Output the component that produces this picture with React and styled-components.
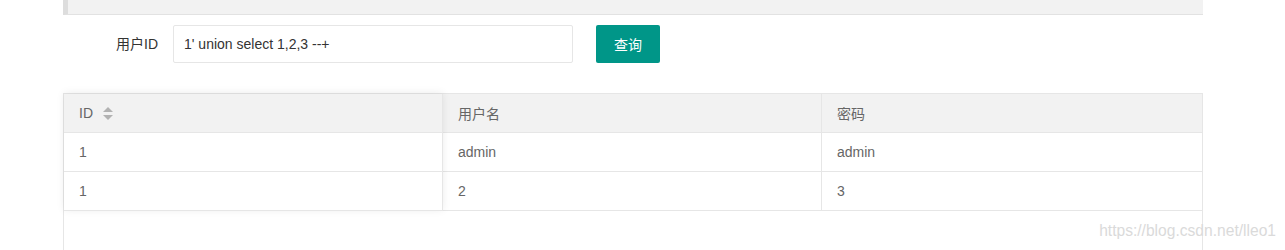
import styled, { createGlobalStyle } from "styled-components";

const GlobalStyle = createGlobalStyle`
  html, body {
    margin: 0;
    padding: 0;
    background: #fff;
    overflow: hidden;
  }
  body {
    font-family: "Liberation Sans", "Noto Sans CJK SC", sans-serif;
    font-size: 14px;
    color: #333;
  }
`;

const columns = [
  { key: "id", title: "ID", width: 379 },
  { key: "username", title: "用户名", width: 379 },
  { key: "password", title: "密码" },
];

const rows = [
  { id: "1", username: "admin", password: "admin" },
  { id: "1", username: "2", password: "3" },
];

export default function App() {
  const [fixed, ...rest] = columns;

  return (
    <Page>
      <GlobalStyle />
      <Quote />

      <FormRow>
        <Label>用户ID</Label>
        <Input type="text" defaultValue="1' union select 1,2,3 --+" />
        <Button>查询</Button>
      </FormRow>

      <TableBox>
        <FixedCol $width={fixed.width}>
          <HeadCell $border>
            {fixed.title}
            <SortIcon />
          </HeadCell>
          {rows.map((r, i) => (
            <Cell key={i} $border>
              {r[fixed.key]}
            </Cell>
          ))}
        </FixedCol>
        {rest.map((col, ci) => (
          <Col key={col.key} $width={col.width}>
            <HeadCell $border={ci < rest.length - 1}>{col.title}</HeadCell>
            {rows.map((r, i) => (
              <Cell key={i} $border={ci < rest.length - 1}>
                {r[col.key]}
              </Cell>
            ))}
          </Col>
        ))}
      </TableBox>

      <Watermark>https://blog.csdn.net/lleo1</Watermark>
    </Page>
  );
}

function SortIcon() {
  return (
    <SortWrap>
      <svg width="10" height="13" viewBox="0 0 10 13">
        <path d="M5 0 L10 5 L0 5 Z" fill="#b2b2b2" />
        <path d="M0 8 L10 8 L5 13 Z" fill="#b2b2b2" />
      </svg>
    </SortWrap>
  );
}

const Page = styled.div`
  position: relative;
  width: 1285px;
  height: 250px;
  box-sizing: border-box;
  padding: 0 82px 0 63px;
`;

const Quote = styled.div`
  height: 14px;
  background: #f2f2f2;
  border-left: 5px solid #dddddd;
  border-bottom: 1px solid #e2e2e2;
`;

const FormRow = styled.div`
  display: flex;
  align-items: center;
  margin-top: 10px;
  height: 38px;
`;

const Label = styled.label`
  width: 110px;
  box-sizing: border-box;
  padding-right: 15px;
  text-align: right;
  font-size: 14px;
  line-height: 38px;
  color: #333;
`;

const Input = styled.input`
  width: 400px;
  height: 38px;
  box-sizing: border-box;
  padding: 0 10px;
  border: 1px solid #e6e6e6;
  border-radius: 2px;
  font-family: inherit;
  font-size: 14px;
  color: #333;
  outline: none;
`;

const Button = styled.button`
  margin-left: 23px;
  height: 38px;
  padding: 0 18px;
  border: none;
  border-radius: 2px;
  background: #009688;
  color: #fff;
  font-family: inherit;
  font-size: 14px;
  cursor: pointer;
`;

const TableBox = styled.div`
  display: flex;
  align-items: flex-start;
  margin-top: 30px;
  min-height: 157px;
  box-sizing: border-box;
  border: 1px solid #e6e6e6;
  border-bottom: none;
  background: #fff;
`;

const Col = styled.div`
  flex: ${(p) => (p.$width ? `0 0 ${p.$width}px` : "1")};
  display: flex;
  flex-direction: column;
`;

const FixedCol = styled(Col)`
  position: relative;
  z-index: 1;
  background: #fff;
  box-shadow: 0 -1px 8px rgba(0, 0, 0, 0.08);
`;

const Cell = styled.div`
  display: flex;
  align-items: center;
  height: 39px;
  box-sizing: border-box;
  padding: 0 15px;
  border-bottom: 1px solid #e6e6e6;
  border-right: ${(p) => (p.$border ? "1px solid #e6e6e6" : "none")};
  font-size: 14px;
  color: #666;
`;

const HeadCell = styled(Cell)`
  background: #f2f2f2;
`;

const SortWrap = styled.span`
  display: inline-flex;
  margin-left: 10px;
  margin-top: 1px;
`;

const Watermark = styled.div`
  position: absolute;
  right: 9px;
  top: 223px;
  font-size: 15.6px;
  line-height: 16px;
  color: #dadada;
  text-shadow: 0 0 1px #fff;
  pointer-events: none;
`;
